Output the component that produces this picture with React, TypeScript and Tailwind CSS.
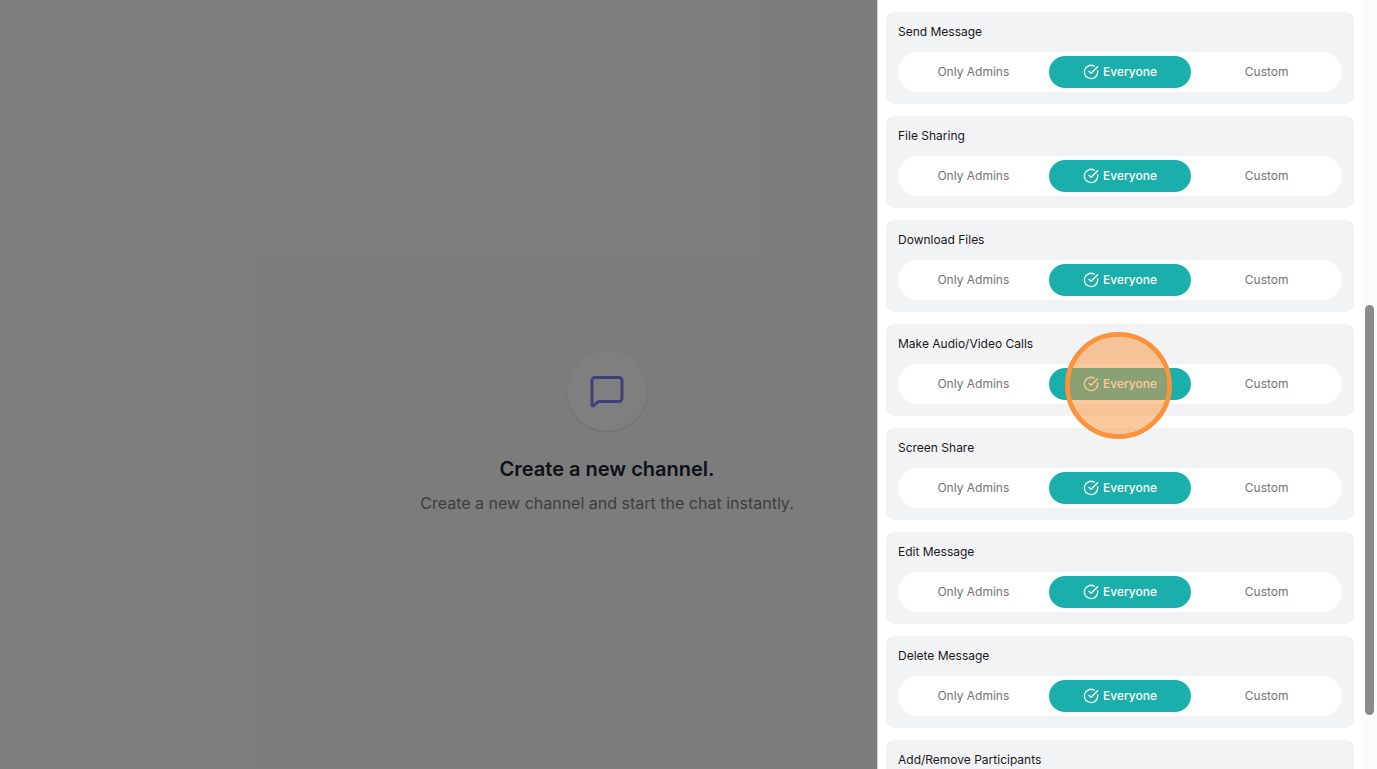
import {useState} from 'react';
import {CircleCheckBig, MessageSquare} from 'lucide-react';
import clsx from 'clsx';

const OPTIONS = ['Only Admins', 'Everyone', 'Custom'];

const PERMISSIONS = [
    {id: 'send-message', label: 'Send Message'},
    {id: 'file-sharing', label: 'File Sharing'},
    {id: 'download-files', label: 'Download Files'},
    {id: 'calls', label: 'Make Audio/Video Calls', highlight: 'Everyone'},
    {id: 'screen-share', label: 'Screen Share'},
    {id: 'edit-message', label: 'Edit Message'},
    {id: 'delete-message', label: 'Delete Message'},
    {id: 'participants', label: 'Add/Remove Participants'},
];

type PermissionProps = {
    id: string;
    label: string;
    highlight?: string;
};

const ClickMarker = () => (
    <span
        aria-hidden="true"
        className="pointer-events-none absolute -top-9 left-4 z-10 size-[107px] rounded-full border-5 border-[#fa933c] bg-[#fa933c]/50 bg-clip-padding"
    />
);

const Permission = ({id, label, highlight}: PermissionProps) => {
    const [value, setValue] = useState('Everyone');

    return (
        <section className="flex shrink-0 flex-col gap-3 rounded-lg bg-[#f2f3f5] p-3">
            <h2 id={id} className="text-xs text-[#18191c]">{label}</h2>
            <div role="radiogroup" aria-labelledby={id} className="grid grid-cols-3 gap-1 rounded-full bg-white p-1">
                {OPTIONS.map(option => (
                    <label
                        key={option}
                        className={clsx(
                            'relative flex h-8 cursor-pointer items-center justify-center gap-1 rounded-full text-xs',
                            value === option ? 'bg-[#1aafaa] font-medium text-white' : 'text-[#737373]',
                        )}>
                        <input
                            type="radio"
                            name={id}
                            value={option}
                            checked={value === option}
                            onChange={() => setValue(option)}
                            className="sr-only"
                        />
                        {value === option && <CircleCheckBig size={16}/>}
                        {option}
                        {highlight === option && <ClickMarker/>}
                    </label>
                ))}
            </div>
        </section>
    );
};

const EmptyState = () => (
    <main className="flex h-full flex-col items-center justify-center pt-24 pr-[163px]">
        <div className="flex size-20 items-center justify-center rounded-full bg-white shadow-sm">
            <MessageSquare size={36} className="text-[#8280f4]"/>
        </div>
        <h1 className="mt-6 text-xl font-semibold text-[#182430]">Create a new channel.</h1>
        <p className="mt-2 text-base text-[#767f87]">Create a new channel and start the chat instantly.</p>
    </main>
);

const Scrollbar = () => (
    <div aria-hidden="true" className="flex w-[15px] shrink-0 flex-col bg-[#fcfcfc] px-[3px]">
        <div className="grow-[305]"/>
        <div className="grow-[410] rounded-full bg-[#8b8b8b]"/>
        <div className="grow-[54]"/>
    </div>
);

const App = () => {
    return (
        <div className="relative h-screen overflow-hidden bg-[#f9f9f9] font-['Inter',sans-serif]">
            <EmptyState/>
            <div className="absolute inset-0 flex justify-end bg-black/50">
                <aside className="flex h-full w-[500px] border-l border-gray-300 bg-white">
                    <div className="flex min-w-0 grow flex-col gap-3 overflow-y-auto px-2 py-3 [scrollbar-width:none]">
                        {PERMISSIONS.map(permission => (
                            <Permission key={permission.id} {...permission}/>
                        ))}
                    </div>
                    <Scrollbar/>
                </aside>
            </div>
        </div>
    );
};

export default App;
